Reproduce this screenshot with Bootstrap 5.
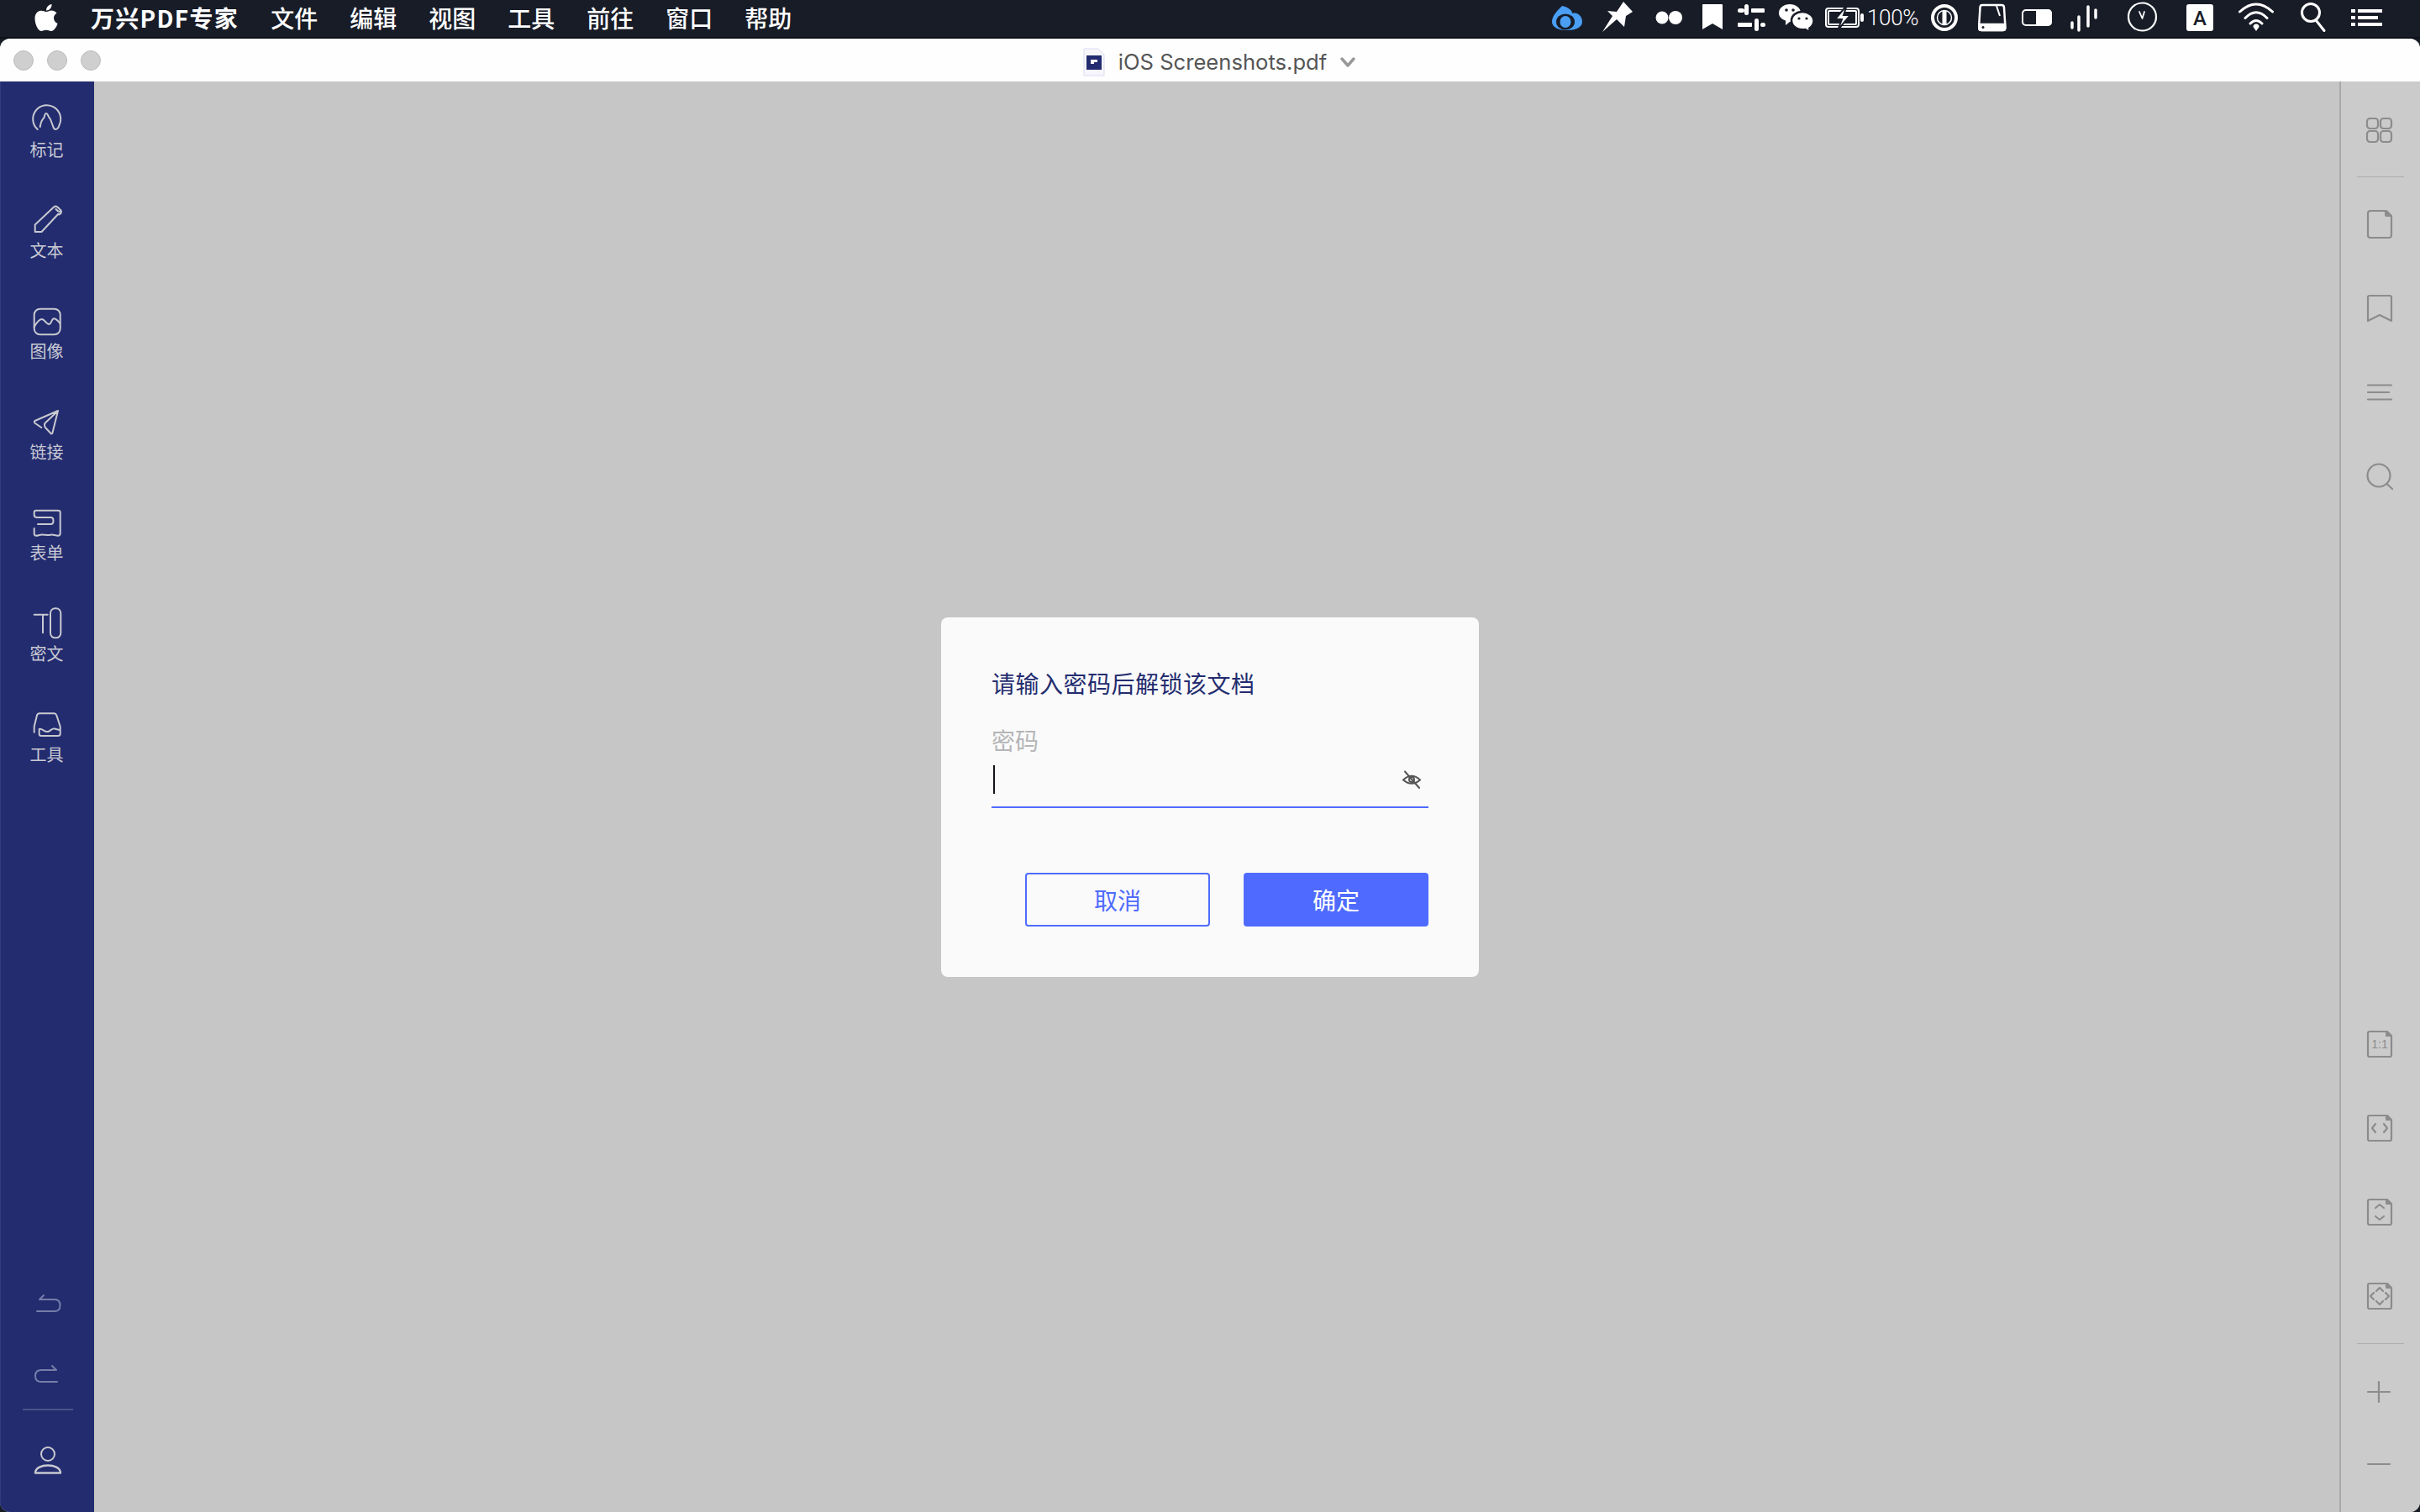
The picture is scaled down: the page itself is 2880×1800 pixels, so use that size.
<!doctype html>
<html lang="zh-CN">
<head>
<meta charset="utf-8">
<title>万兴PDF专家</title>
<link href="https://cdn.jsdelivr.net/npm/bootstrap@5.3.0/dist/css/bootstrap.min.css" rel="stylesheet">
<style>
html,body{height:100%;margin:0;overflow:hidden;background:#181c27;font-family:"Noto Sans CJK SC","Liberation Sans",sans-serif}
svg{display:block;flex:none}
.mbar{height:46px;background:#181c27;color:#fff;font-size:28px;font-weight:500;line-height:1;padding:0 45px 2px 41px;border-bottom:2px solid #0e1118}
.mbar-apple{margin-right:39px}
.mbar-menu{gap:38px}
.mbar-brand{font-weight:700;letter-spacing:1.3px}
.tray-text{width:76px;font-family:Roboto,"Liberation Sans",sans-serif;font-weight:300;font-size:26px;letter-spacing:-.3px}
.win{flex:1 1 0;min-height:0;border-radius:12px;overflow:hidden;position:relative;background:#c6c6c6}
.tbar{height:51px;background:#fefefe;padding-left:16px;flex:none}
.lights{flex:1 1 0;gap:16px}
.light{width:24px;height:24px;border-radius:50%;background:#cfcfcf;border:1px solid #bcbcbc}
.tbar-title{padding-left:6px;padding-top:4px;gap:16px;color:#555;font-family:Inter,"Liberation Sans",sans-serif;font-size:25.6px;line-height:1}
.tbar-right{flex:1 1 0}
.side{width:112px;background:#232c6f;border-left:1px solid #323b7c;padding:21px 2px 0 0;flex:none}
.side-item{height:120px;color:#c9cad4;font-size:20px;line-height:28px}
.side-item svg,.side-low svg{fill:none;stroke:#c8c9d0;stroke-width:2;stroke-linecap:round;stroke-linejoin:round}
.side-item span{margin-top:-2px}
.side-low{margin-top:auto;padding-bottom:36px}
.side-low svg.dim{stroke:#767da8}
.side-step{height:84px}
.side-rule{width:60px;height:2px;background:#4a5288;margin:0 0 37px 2px}
.stage{background:#c6c6c6}
.rail{width:96px;background:#cbcbcb;border-left:2px solid #a9a9a9;flex:none;padding:34px 0 33px}
.rail svg{fill:none;stroke:#8c8c8c;stroke-width:2.2;stroke-linejoin:round;stroke-linecap:round}
.rail svg .ink{fill:#8c8c8c;stroke:none}
.rail-rule{width:56px;height:1px;background:#aeaeae}
.rail-top{gap:52px}
.rail-top .rail-rule{margin:-21px 0 -20px}
.rail-low{margin-top:auto;gap:52px}
.rail-low .rail-rule{margin:-20px 0 -19px}
.rail-low .tight{margin-top:-14px}
.veil{position:absolute;inset:51px 0 0 0;padding-top:1px}
.pw-box{width:640px;height:428px;background:#fafafa;border-radius:8px;padding:58px 60px 60px}
.pw-title{font-size:28px;line-height:40px;color:#232c6f;font-weight:400;letter-spacing:.5px;margin-bottom:28px}
.pw-label{font-size:28px;line-height:40px;color:#b5b5b8;margin:0 0 11px}
.pw-field{height:50px;border-bottom:2px solid #4f6bff;padding:0 8px 16px 2px}
.pw-caret{width:2px;height:34px;background:#14141c}
.pw-actions{margin-top:auto;gap:40px}
.pw-btn{width:220px;height:64px;border-radius:4px;font-size:28px;line-height:1;padding:0;border:2px solid #4f6bff}
.pw-cancel{background:transparent;color:#4f6bff}
.pw-ok{background:#4f6bff;color:#fff}
</style>
</head>
<body class="d-flex flex-column">

<header class="mbar d-flex align-items-center justify-content-between flex-none">
  <div class="d-flex align-items-center">
    <svg class="mbar-apple" width="28" height="32" viewBox="0 0 28 32" fill="#fff"><path d="M14 9C12 9 10 7.500 7.500 7.800 3 8.200.5 12 .5 17c0 6 3.500 15 7.500 15 2 0 3.500-1.200 6-1.200s3.500 1.200 6 1.200c3.500 0 6.500-5.500 7.500-9-3-1.500-4.500-4-4.500-6.500 0-2.500 1.300-4.300 3.500-6-1.700-2-4-3-6-3-2.500 0-4.500 1.500-6.500 1.500Z"/><path d="M14 7.500C13.800 4 16.500.5 20.500 0 20.800 4 18 7.500 14 7.500Z"/></svg>
    <nav class="d-flex mbar-menu">
      <span class="mbar-brand">万兴PDF专家</span><span>文件</span><span>编辑</span><span>视图</span><span>工具</span><span>前往</span><span>窗口</span><span>帮助</span>
    </nav>
  </div>
  <div class="d-flex align-items-center">
    <svg width="60" height="44" viewBox="0 0 60 44"><path fill="#4a9ff5" d="M12 8c9 2 12 6 12 9 6-2 12 3 12 10 0 7-9 10-18 10S0 34 0 27c0-7 6-13 12-19Z"/><ellipse cx="16" cy="27" rx="11" ry="9.500" fill="#181c27"/><ellipse cx="16" cy="27" rx="6.500" ry="7" fill="#4a9ff5"/></svg>
    <svg width="63" height="44" viewBox="0 0 63 44" fill="#fff"><polygon points="25,3 36,15 28,20 26,33 17,24 0,39 12,20 6,14 17,15"/></svg>
    <svg width="56" height="44" viewBox="0 0 56 44" fill="#fff"><circle cx="8" cy="22" r="7.500"/><circle cx="24" cy="22" r="8"/></svg>
    <svg width="42" height="44" viewBox="0 0 42 44" fill="#fff"><path d="M1 6h22a1 1 0 0 1 1 1v29l-12-7-12 7V7a1 1 0 0 1 1-1Z"/></svg>
    <svg width="49" height="44" viewBox="0 0 49 44" fill="#fff"><rect x="0" y="11" width="8" height="5" rx="2.500"/><rect x="8" y="6" width="5" height="13" rx="2.500"/><rect x="16" y="11" width="16" height="5" rx="1"/><rect x="0" y="28" width="17" height="5" rx="1"/><rect x="20" y="23" width="5" height="15" rx="2.500"/><rect x="27" y="28" width="6" height="5" rx="2.500"/></svg>
    <svg width="55" height="44" viewBox="0 0 55 44" fill="#fff"><path d="M13 6c7 0 13 4.500 13 10.500S20 27 13 27l-5 4v-5.500C3 24 0 20.500 0 16.500 0 10.500 6 6 13 6Z"/><path stroke="#181c27" stroke-width="2.500" d="M28 15c7.500 0 13.500 5 13.500 11 0 3.500-2 6.500-5 8.500V39l-5-3c-1 .2-2.500.3-3.500.3-7.500 0-13-5-13-10.800S20.500 15 28 15Z"/><g fill="#181c27"><circle cx="9" cy="13" r="1.800"/><circle cx="17" cy="13" r="1.800"/><circle cx="24" cy="23" r="1.600"/><circle cx="33" cy="23" r="1.600"/></g></svg>
    <svg width="50" height="44" viewBox="0 0 50 44"><rect x="1" y="11" width="39" height="22" rx="3" fill="none" stroke="#fff" stroke-width="2"/><rect x="4" y="14" width="33" height="16" rx="1" fill="none" stroke="#fff" stroke-width="2"/><rect x="42" y="17" width="4" height="10" rx="2" fill="#fff"/><path d="M26 7 12 24h8l-5 13 15-18h-8l4-12Z" fill="#fff" stroke="#181c27" stroke-width="2"/></svg>
    <span class="tray-text">100%</span>
    <svg width="56" height="44" viewBox="0 0 56 44" fill="none" stroke="#fff"><circle cx="16" cy="22" r="14" stroke-width="4"/><circle cx="16" cy="22" r="8.500" stroke-width="1.500"/><rect x="13.500" y="14" width="5" height="16" fill="#fff" stroke="none"/></svg>
    <svg width="52" height="44" viewBox="0 0 52 44" fill="none" stroke="#fff" stroke-width="2.500"><path d="M5 7h23c2 0 3 1 3 3l1.500 24c0 2-1 3-3 3H4c-2 0-3-1-3-3L2.500 10c0-2 1-3 2.500-3Z"/><path fill="#fff" d="M2 30h30v5c0 1.500-1 2-2.500 2H4c-1.500 0-2.500-.5-2.500-2Z"/><path stroke-width="2" d="M22 8l4 12"/><circle cx="6" cy="33.500" r="1.500" fill="#181c27" stroke="none"/></svg>
    <svg width="58" height="44" viewBox="0 0 58 44"><rect x="1" y="13" width="34" height="18" rx="4" fill="none" stroke="#fff" stroke-width="2"/><path d="M17 12h14a5 5 0 0 1 5 5v10a5 5 0 0 1-5 5H17Z" fill="#fff"/></svg>
    <svg width="68" height="44" viewBox="0 0 68 44" fill="none" stroke="#fff" stroke-width="3.500" stroke-linecap="round"><path d="M2 28v6M10 21v16M21 9v23M30 13v9"/></svg>
    <svg width="70" height="44" viewBox="0 0 70 44" fill="none" stroke="#fff" stroke-width="2.200" stroke-linecap="round" stroke-linejoin="round"><circle cx="17.500" cy="21" r="16.500"/><path stroke-width="1.800" d="M14 15l3.500 8 2.500-8"/></svg>
    <svg width="62" height="44" viewBox="0 0 62 44"><rect x="0" y="6" width="32" height="32" rx="3" fill="#fff"/><text x="16" y="31" text-anchor="middle" font-family="Roboto,'Liberation Sans',sans-serif" font-size="24" fill="#181c27">A</text></svg>
    <svg width="74" height="44" viewBox="0 0 74 44" fill="none" stroke="#fff" stroke-width="3" stroke-linecap="round"><path d="M1.500 15Q21-3 40.500 15M8 22.500Q21 9 34 22.500M14 29Q21 22 28 29"/><path fill="#fff" stroke="none" d="M17.500 33a3.500 3.500 0 0 1 7 0L21 38Z"/></svg>
    <svg width="60" height="44" viewBox="0 0 60 44" fill="none" stroke="#fff" stroke-width="3" stroke-linecap="round"><circle cx="12" cy="16" r="10.500"/><path d="M18.500 25.500 28 37.500"/></svg>
    <svg width="37" height="44" viewBox="0 0 37 44" fill="#fff"><rect x="0" y="12" width="5" height="4"/><rect x="8" y="12" width="29" height="4"/><rect x="0" y="20" width="5" height="4"/><rect x="8" y="20" width="24" height="4"/><rect x="0" y="28" width="5" height="4"/><rect x="8" y="28" width="29" height="4"/></svg>
  </div>
</header>

<div class="win d-flex flex-column">
  <div class="tbar d-flex align-items-center">
    <div class="lights d-flex"><i class="light"></i><i class="light"></i><i class="light"></i></div>
    <div class="tbar-title d-flex align-items-center">
      <svg width="26" height="34" viewBox="0 0 26 34"><path d="M1 1h17l7 7v25H1Z" fill="#f6f6fc" stroke="#dcdcf2"/><rect x="4" y="9" width="18" height="17" fill="#232c6f"/><path d="M9 14h8v3h-4v2h-4Z" fill="#fff"/></svg>
      <span>iOS Screenshots.pdf</span>
      <svg width="18" height="12" viewBox="0 0 18 12" fill="none" stroke="#999" stroke-width="3.500" stroke-linecap="round" stroke-linejoin="round"><path d="M2 2l7 8 7-8"/></svg>
    </div>
    <div class="tbar-right"></div>
  </div>

  <div class="d-flex flex-grow-1" style="min-height:0">
    <aside class="side d-flex flex-column align-items-center">
      <div class="side-item d-flex flex-column align-items-center">
        <svg width="48" height="48" viewBox="0 0 48 48"><path d="M12.700 36A16.500 16.500 0 1 1 38.500 31Q37 36 34 36 32 36 31 32L28 24Q26 22 25 19 24 17 23 17 21.500 17 20.500 22 17 25 15.700 33"/></svg>
        <span>标记</span>
      </div>
      <div class="side-item d-flex flex-column align-items-center">
        <svg width="48" height="48" viewBox="0 0 48 48"><path d="M9.700 38V29.500L32 8.500Q34.500 6.500 37 9L40.500 12.500Q42 16 38 17.500M37.500 16.500 17.500 38H9.700M34.500 11Q37 14 39 14"/></svg>
        <span>文本</span>
      </div>
      <div class="side-item d-flex flex-column align-items-center">
        <svg width="48" height="48" viewBox="0 0 48 48"><rect x="8.700" y="9.700" width="31" height="30.600" rx="7"/><path d="M8.700 31.300C11 27 15 22 18 22 21 22 23 28 26.300 28 29 28 29.500 21.300 32 21.300 35 21.300 37 24 39.500 27"/></svg>
        <span>图像</span>
      </div>
      <div class="side-item d-flex flex-column align-items-center">
        <svg width="48" height="48" viewBox="0 0 48 48"><path d="M37 11 9.500 23Q8 24.500 10 26L17.300 31M37 11 21.300 26Q20.500 29 22 31L28 37.500Q30 39.500 30.500 37L37 11Z"/></svg>
        <span>链接</span>
      </div>
      <div class="side-item d-flex flex-column align-items-center">
        <svg width="48" height="48" viewBox="0 0 48 48"><path d="M13 26H28.500Q31.500 26 31.500 22 31.500 18 28.500 18H12Q8.700 18 8.700 15V12Q8.700 9.700 11 9.700H37Q39.700 9.700 39.700 12V37Q39.700 39.700 37 39.700C33 39.700 32 38 28 38.700 24 39.500 20 38.200 16 38.700 14 39 13 39.700 11 39.700 9.500 39.700 8.700 38.500 8.700 37V31"/></svg>
        <span>表单</span>
      </div>
      <div class="side-item d-flex flex-column align-items-center">
        <svg width="48" height="48" viewBox="0 0 48 48"><path d="M8.700 13.700H24.700M19 13.700V35.300"/><rect x="28" y="6.300" width="12.300" height="35" rx="5.500"/></svg>
        <span>密文</span>
      </div>
      <div class="side-item d-flex flex-column align-items-center">
        <svg width="48" height="48" viewBox="0 0 48 48"><path d="M8.700 33.700V27L12 13.500Q12.700 11.300 15 11.300H32.500Q34.500 11.300 35.300 13.500L39.700 27V35.500Q39.700 38 37 38H17Q14.700 38 14.700 35.500V30C18 28.500 21 34 25 33 28 32.300 30 28.500 33 29.500 35 30 37 31 39.700 31"/></svg>
        <span>工具</span>
      </div>
      <div class="side-low d-flex flex-column align-items-center">
        <div class="side-step d-flex align-items-center">
          <svg class="dim" width="48" height="48" viewBox="0 0 48 48"><path d="M20 15 15 20H33Q39.500 20 39.500 27 39.500 34 33 34H12"/></svg>
        </div>
        <div class="side-step d-flex align-items-center">
          <svg class="dim" width="48" height="48" viewBox="0 0 48 48"><path d="M30 15 35 20H17Q10 20 10 27 10 34 17 34H36"/></svg>
        </div>
        <div class="side-rule"></div>
        <svg width="48" height="48" viewBox="0 0 48 48"><circle cx="25" cy="15" r="8"/><path d="M10 37.500C10 31 18 28.500 25 28.500S40 31 40 37.500Z" stroke-width="2.400"/></svg>
      </div>
    </aside>

    <main class="stage flex-grow-1"></main>

    <aside class="rail d-flex flex-column align-items-center">
      <div class="rail-top d-flex flex-column align-items-center">
        <svg width="48" height="48" viewBox="0 0 48 48"><rect x="8" y="10" width="13" height="12" rx="3.500"/><rect x="24" y="10" width="13" height="12" rx="3.500"/><rect x="8" y="25" width="13" height="13" rx="3.500"/><rect x="24" y="25" width="13" height="13" rx="3.500"/></svg>
        <div class="rail-rule"></div>
        <svg width="48" height="48" viewBox="0 0 48 48"><path d="M12 8H31L37 14V37Q37 40 34 40H12Q9 40 9 37V11Q9 8 12 8Z"/><path class="ink" d="M29 8H31L37 14V15H31Q29 15 29 13Z"/></svg>
        <svg width="48" height="48" viewBox="0 0 48 48"><path d="M11 9H35Q37 9 37 11V39L23 32 9 39V11Q9 9 11 9Z"/></svg>
        <svg width="48" height="48" viewBox="0 0 48 48"><path d="M9 15.500H37M9 24H34M9 32.500H37"/></svg>
        <svg width="48" height="48" viewBox="0 0 48 48"><circle cx="22" cy="23" r="13.500"/><path d="M31.500 33 38 39"/></svg>
      </div>
      <div class="rail-low d-flex flex-column align-items-center">
        <svg width="48" height="48" viewBox="0 0 48 48"><path d="M11 9H32L37 14V37Q37 39 35 39H11Q9 39 9 37V11Q9 9 11 9Z"/><path class="ink" d="M30 9H32L37 14V15H31Q30 15 30 14Z"/><text x="23" y="29" text-anchor="middle" font-family="'Liberation Sans',sans-serif" font-size="14" fill="#8c8c8c" stroke="none">1:1</text></svg>
        <svg width="48" height="48" viewBox="0 0 48 48"><path d="M11 9H32L37 14V37Q37 39 35 39H11Q9 39 9 37V11Q9 9 11 9Z"/><path class="ink" d="M30 9H32L37 14V15H31Q30 15 30 14Z"/><path d="M18 19 14 24 18 29M28 19 32 24 28 29"/></svg>
        <svg width="48" height="48" viewBox="0 0 48 48"><path d="M11 9H32L37 14V37Q37 39 35 39H11Q9 39 9 37V11Q9 9 11 9Z"/><path class="ink" d="M30 9H32L37 14V15H31Q30 15 30 14Z"/><path d="M18 19 23 15 28 19M18 29 23 33 28 29"/></svg>
        <svg width="48" height="48" viewBox="0 0 48 48"><path d="M11 9H32L37 14V37Q37 39 35 39H11Q9 39 9 37V11Q9 9 11 9Z"/><path class="ink" d="M30 9H32L37 14V15H31Q30 15 30 14Z"/><path d="M19 18 23 14 27 18M19 30 23 34 27 30M16 20 12 24 16 28M30 20 34 24 30 28"/></svg>
        <div class="rail-rule"></div>
        <svg width="48" height="48" viewBox="0 0 48 48"><path d="M9 24H35M22 12V36"/></svg>
        <svg class="tight" width="48" height="48" viewBox="0 0 48 48"><path d="M9 24H35"/></svg>
      </div>
    </aside>
  </div>

  <div class="veil d-flex align-items-center justify-content-center">
    <div class="pw-box d-flex flex-column">
      <div class="pw-title">请输入密码后解锁该文档</div>
      <label class="pw-label">密码</label>
      <div class="pw-field d-flex align-items-center justify-content-between">
        <i class="pw-caret"></i>
        <svg width="24" height="24" viewBox="0 0 24 24" fill="none" stroke="#555" stroke-width="2" stroke-linecap="round"><path d="M2 12.500Q12 3 22 12.500 12 21 2 12.500Z"/><circle cx="12" cy="12" r="3"/><path d="M4 2.500 21 22"/></svg>
      </div>
      <div class="pw-actions d-flex justify-content-end">
        <button type="button" class="btn pw-btn pw-cancel">取消</button>
        <button type="button" class="btn pw-btn pw-ok">确定</button>
      </div>
    </div>
  </div>
</div>

<script src="https://cdn.jsdelivr.net/npm/bootstrap@5.3.0/dist/js/bootstrap.bundle.min.js"></script>
</body>
</html>
